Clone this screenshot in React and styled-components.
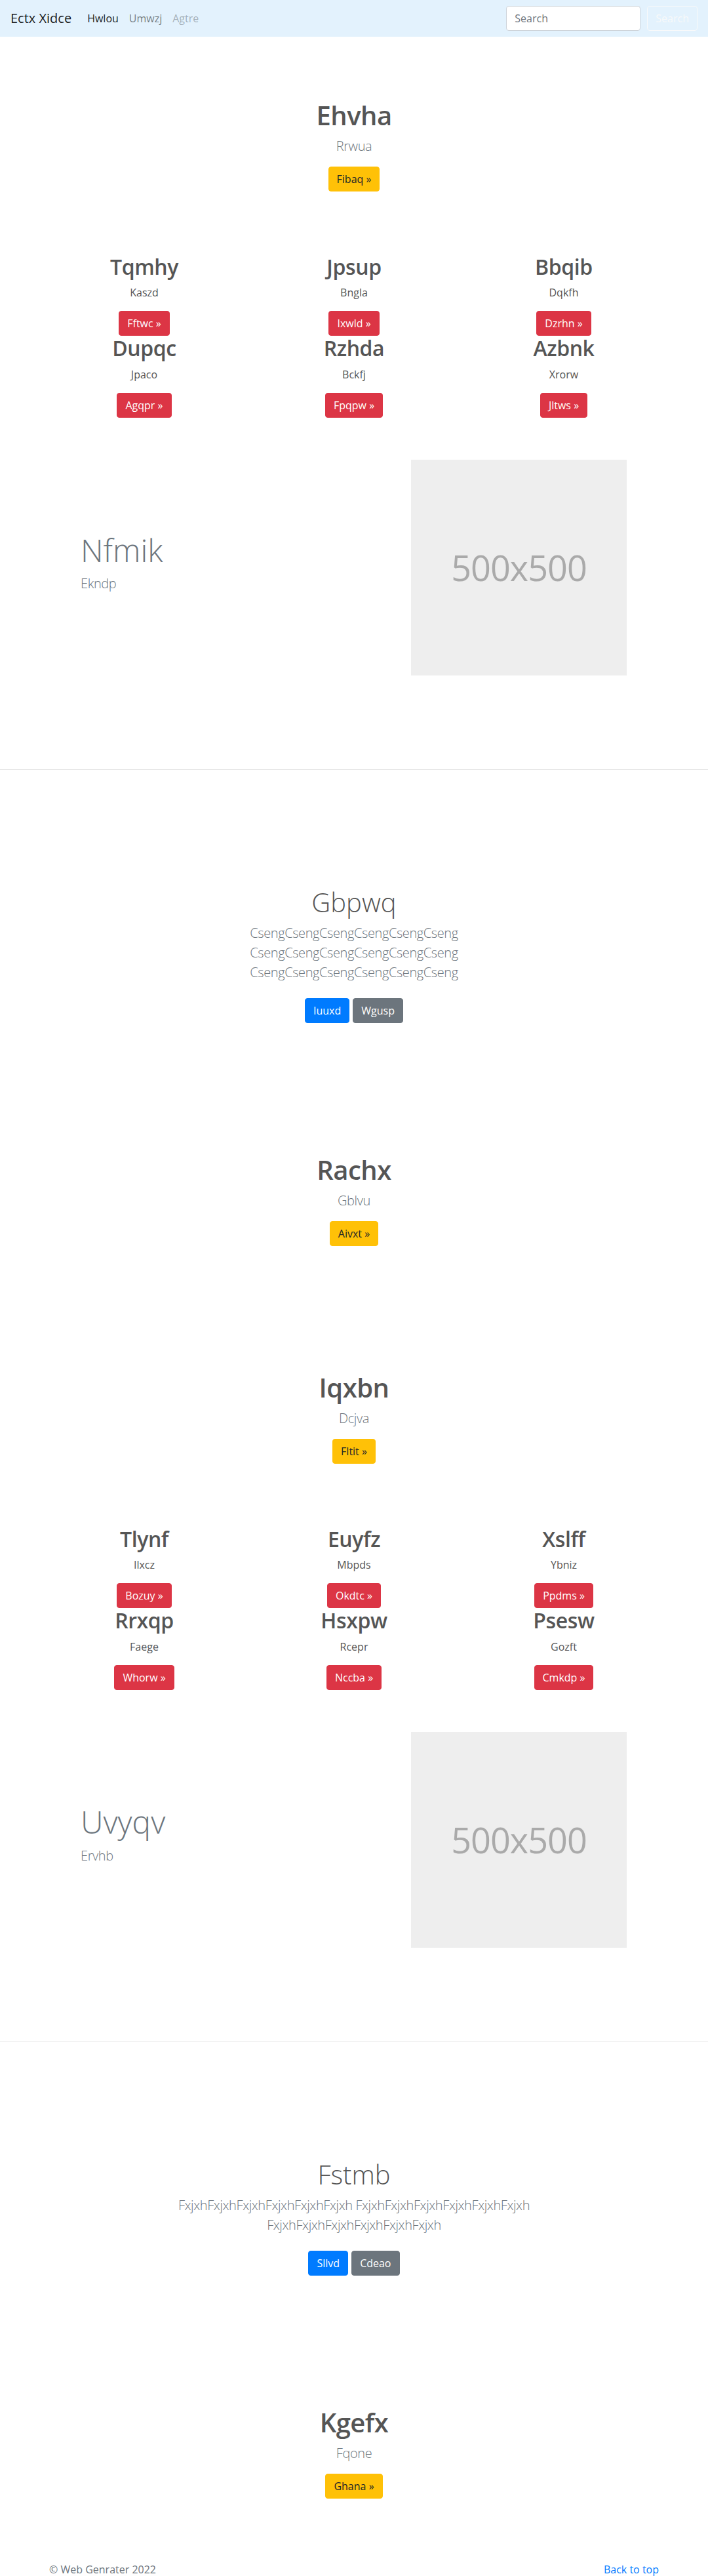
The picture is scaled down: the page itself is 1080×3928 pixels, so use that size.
import React from 'react';
import styled, { createGlobalStyle } from 'styled-components';

const GlobalStyle = createGlobalStyle`
  html, body { margin: 0; padding: 0; }
  * { box-sizing: border-box; }
  body {
    font-family: "Open Sans", "Noto Sans", Arial, sans-serif;
    font-size: 16px;
    line-height: 1.5;
    color: #212529;
    background: #fff;
  }
`;

const Nav = styled.nav`
  height: 56px;
  background: #e3f2fd;
  display: flex;
  align-items: center;
  padding: 0 16px;
`;

const Brand = styled.a`
  font-size: 20px;
  line-height: 30px;
  color: rgba(0, 0, 0, 0.9);
  margin-right: 16px;
  text-decoration: none;
`;

const NavLinks = styled.div`
  display: flex;
  flex: 1;
`;

const NavLink = styled.a`
  padding: 0 8px;
  text-decoration: none;
  color: ${(p) =>
    p.$state === 'active'
      ? 'rgba(0,0,0,0.9)'
      : p.$state === 'disabled'
      ? 'rgba(0,0,0,0.3)'
      : 'rgba(0,0,0,0.5)'};
`;

const SearchForm = styled.form`
  display: flex;
  align-items: center;
  gap: 10px;
`;

const SearchInput = styled.input`
  width: 205px;
  height: 38px;
  padding: 6px 12px;
  font-family: inherit;
  font-size: 16px;
  color: #495057;
  background: #fff;
  border: 1px solid #ced4da;
  border-radius: 4px;
  &::placeholder {
    color: #6c757d;
  }
`;

const OutlineButton = styled.button`
  height: 38px;
  padding: 6px 12px;
  font-family: inherit;
  font-size: 16px;
  line-height: 24px;
  color: #f8f9fa;
  background: transparent;
  border: 1px solid #f8f9fa;
  border-radius: 4px;
`;

const variants = {
  warning: { bg: '#ffc107', fg: '#212529' },
  danger: { bg: '#dc3545', fg: '#fff' },
  primary: { bg: '#007bff', fg: '#fff' },
  secondary: { bg: '#6c757d', fg: '#fff' },
};

const Button = styled.a`
  display: inline-block;
  height: 38px;
  padding: 6px 12px;
  font-size: 16px;
  line-height: 24px;
  border-radius: 4px;
  text-decoration: none;
  white-space: nowrap;
  background: ${(p) => variants[p.$variant].bg};
  border: 1px solid ${(p) => variants[p.$variant].bg};
  color: ${(p) => variants[p.$variant].fg};
`;

const ButtonRow = styled.div`
  display: flex;
  justify-content: center;
  gap: 5px;
  padding: ${(p) => (p.$spaced ? '8px 0' : '0')};
`;

const Hero = styled.section`
  padding: 96px 16px;
  text-align: center;
`;

const HeroTitle = styled.h1`
  margin: 0 0 8px;
  font-size: 40px;
  line-height: 48px;
  font-weight: 600;
  color: #555;
  letter-spacing: -0.5px;
`;

const Lead = styled.p`
  margin: 0 0 16px;
  font-size: 20px;
  line-height: 30px;
  font-weight: 300;
  color: #6c757d;
  letter-spacing: -0.4px;
`;

const FeatureGrid = styled.section`
  width: 960px;
  margin: 0 auto;
  padding-bottom: 64px;
  display: grid;
  grid-template-columns: repeat(3, 1fr);
  text-align: center;
`;

const FeatureCell = styled.div`
  padding: 0 15px;
`;

const FeatureTitle = styled.h2`
  margin: 0 0 8px;
  font-size: 32px;
  line-height: 38.4px;
  font-weight: 600;
  color: #555;
  letter-spacing: -0.4px;
`;

const FeatureText = styled.p`
  margin: 0 0 16px;
  color: #555;
`;

const Featurette = styled.section`
  width: 960px;
  margin: 0 auto;
  padding: 0 64px 143px 0;
  display: grid;
  grid-template-columns: 1fr 329px;
  align-items: center;
`;

const FeaturetteText = styled.div`
  padding-left: 63px;
`;

const FeaturetteTitle = styled.h2`
  margin: 0 0 8px;
  font-size: 48px;
  line-height: 57.6px;
  font-weight: 300;
  color: #6c757d;
`;

const Placeholder = styled.div`
  width: 329px;
  height: 329px;
  background: #eee;
  color: #aaa;
  display: flex;
  align-items: center;
  justify-content: center;
  font-size: 54px;
  letter-spacing: -1px;
`;

const Divider = styled.hr`
  margin: 0;
  border: 0;
  border-top: 1px solid #e5e5e5;
`;

const Jumbo = styled.section`
  padding: 178px 16px 96px;
  text-align: center;
`;

const JumboInner = styled.div`
  max-width: 610px;
  margin: 0 auto;
`;

const JumboTitle = styled.h1`
  margin: 0 0 8px;
  font-size: 40px;
  line-height: 48px;
  font-weight: 300;
  color: #555;
`;

const Footer = styled.footer`
  width: 960px;
  margin: 0 auto;
  padding: 0 15px;
  display: flex;
  justify-content: space-between;
  color: #6c757d;
`;

const FooterLink = styled.a`
  color: #007bff;
  text-decoration: none;
`;

const HeroBlock = ({ title, sub, cta }) => (
  <Hero>
    <HeroTitle>{title}</HeroTitle>
    <Lead>{sub}</Lead>
    <ButtonRow>
      <Button $variant="warning">{cta} »</Button>
    </ButtonRow>
  </Hero>
);

const Features = ({ items }) => (
  <FeatureGrid>
    {items.map(([t, s, b]) => (
      <FeatureCell key={t}>
        <FeatureTitle>{t}</FeatureTitle>
        <FeatureText>{s}</FeatureText>
        <ButtonRow>
          <Button $variant="danger">{b} »</Button>
        </ButtonRow>
      </FeatureCell>
    ))}
  </FeatureGrid>
);

const FeatureBlock = ({ title, sub }) => (
  <Featurette>
    <FeaturetteText>
      <FeaturetteTitle>{title}</FeaturetteTitle>
      <Lead>{sub}</Lead>
    </FeaturetteText>
    <Placeholder>500x500</Placeholder>
  </Featurette>
);

const JumboBlock = ({ title, word, primary, secondary }) => (
  <Jumbo>
    <JumboInner>
      <JumboTitle>{title}</JumboTitle>
      <Lead>{[0, 1, 2].map(() => word.repeat(6)).join(' ')}</Lead>
      <ButtonRow $spaced>
        <Button $variant="primary">{primary}</Button>
        <Button $variant="secondary">{secondary}</Button>
      </ButtonRow>
    </JumboInner>
  </Jumbo>
);

export default function App() {
  return (
    <>
      <GlobalStyle />
      <Nav>
        <Brand href="#">Ectx Xidce</Brand>
        <NavLinks>
          <NavLink $state="active" href="#">Hwlou</NavLink>
          <NavLink href="#">Umwzj</NavLink>
          <NavLink $state="disabled" href="#">Agtre</NavLink>
        </NavLinks>
        <SearchForm onSubmit={(e) => e.preventDefault()}>
          <SearchInput type="search" placeholder="Search" />
          <OutlineButton type="submit">Search</OutlineButton>
        </SearchForm>
      </Nav>

      <HeroBlock title="Ehvha" sub="Rrwua" cta="Fibaq" />
      <Features
        items={[
          ['Tqmhy', 'Kaszd', 'Fftwc'],
          ['Jpsup', 'Bngla', 'Ixwld'],
          ['Bbqib', 'Dqkfh', 'Dzrhn'],
          ['Dupqc', 'Jpaco', 'Agqpr'],
          ['Rzhda', 'Bckfj', 'Fpqpw'],
          ['Azbnk', 'Xrorw', 'Jltws'],
        ]}
      />
      <FeatureBlock title="Nfmik" sub="Ekndp" />
      <Divider />
      <JumboBlock title="Gbpwq" word="Cseng" primary="Iuuxd" secondary="Wgusp" />
      <HeroBlock title="Rachx" sub="Gblvu" cta="Aivxt" />
      <HeroBlock title="Iqxbn" sub="Dcjva" cta="Fltit" />
      <Features
        items={[
          ['Tlynf', 'Ilxcz', 'Bozuy'],
          ['Euyfz', 'Mbpds', 'Okdtc'],
          ['Xslff', 'Ybniz', 'Ppdms'],
          ['Rrxqp', 'Faege', 'Whorw'],
          ['Hsxpw', 'Rcepr', 'Nccba'],
          ['Psesw', 'Gozft', 'Cmkdp'],
        ]}
      />
      <FeatureBlock title="Uvyqv" sub="Ervhb" />
      <Divider />
      <JumboBlock title="Fstmb" word="Fxjxh" primary="Sllvd" secondary="Cdeao" />
      <HeroBlock title="Kgefx" sub="Fqone" cta="Ghana" />
      <Footer>
        <span>© Web Genrater 2022</span>
        <FooterLink href="#">Back to top</FooterLink>
      </Footer>
    </>
  );
}
